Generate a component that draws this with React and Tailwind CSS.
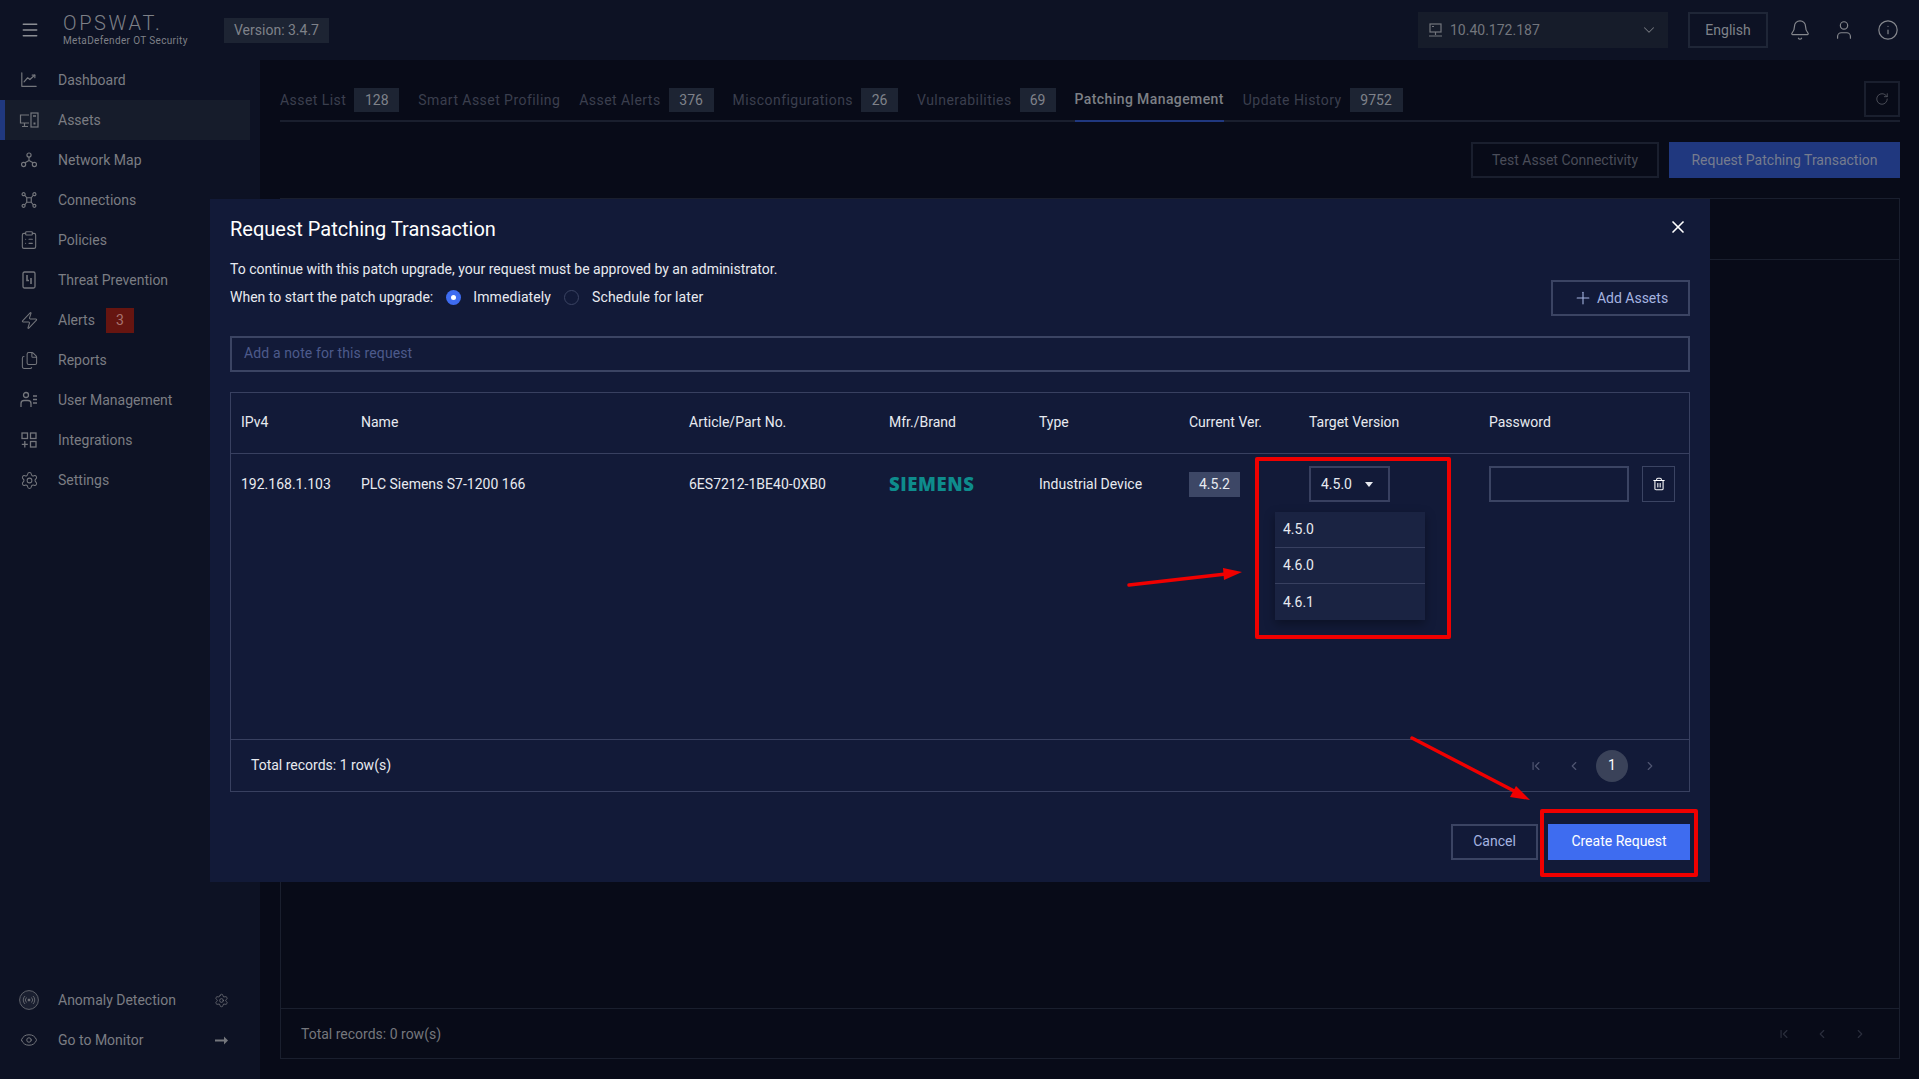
import React from "react";
import { Menu, ChevronDown, Bell, User, Info, RotateCw, X, Plus, Trash2, ChevronLeft, ChevronRight, ChevronFirst, Eye, Settings, ClipboardList, Zap, Files } from "lucide-react";

const I = ({ children, s = 20 }) => (
  <svg width={s} height={s} viewBox="0 0 20 20" fill="none" stroke="currentColor" strokeWidth="1.3" strokeLinecap="round" strokeLinejoin="round">{children}</svg>
);
const IcDash = () => <I s={18}><path d="M2 2v15h16" /><path d="M4.5 12l4-4.5 2.5 2 5.5-5" /><path d="M13.5 4.5h3v3" /></I>;
const IcAssets = () => <svg width="20" height="16" viewBox="0 0 20 16" fill="none" stroke="currentColor" strokeWidth="1.2"><path d="M10 3H1.5v8h8.500" /><path d="M5.500 11v3M3 14.500h6" /><rect x="12" y="1" width="7" height="14" /><path d="M14 4h3" strokeWidth="1.500" /><rect x="14.500" y="10.500" width="2" height="2" fill="currentColor" stroke="none" /></svg>;
const IcNet = () => <I s={18}><circle cx="10" cy="4.500" r="2.300" /><circle cx="4" cy="15" r="2.300" /><circle cx="16" cy="15" r="2.300" /><path d="M10 7v3.500M6 12.800L10 10.500l4 2.300" /></I>;
const IcConn = () => <I s={18}><circle cx="4" cy="3.500" r="1.700" /><circle cx="16" cy="3.500" r="1.700" /><circle cx="4" cy="16.500" r="1.700" /><circle cx="16" cy="16.500" r="1.700" /><path d="M5.500 5l2 2.500h5l2-2.500M5.500 15l2-2.500h5l2 2.500M7.500 7.500v5M12.500 7.500v5" /></I>;
const IcThreat = () => <svg width="14" height="18" viewBox="0 0 14 18" fill="none" stroke="currentColor" strokeWidth="1.300"><rect x="1" y="1" width="12" height="16" rx="1.500" /><path d="M5 4v5.500h2M9 7v6" strokeWidth="1.600" /></svg>;
const IcUsers = () => <svg width="18" height="18" viewBox="0 0 18 18" fill="none" stroke="currentColor" strokeWidth="1.300"><circle cx="6" cy="4" r="2.500" /><path d="M1 16v-3.500a3 3 0 013-3h4a3 3 0 013 3V16" /><path d="M13 5h4M13 8.500h4M13 12h4" /></svg>;
const IcInteg = () => <svg width="16" height="16" viewBox="0 0 16 16" fill="none" stroke="currentColor" strokeWidth="1.300"><rect x="1" y="1" width="5.500" height="5.500" /><rect x="9.500" y="1" width="5.500" height="5.500" /><rect x="9.500" y="9.500" width="5.500" height="5.500" /><path d="M3.800 9v6.500M0.800 12.300h6" /></svg>;
const IcAnom = () => <svg width="20" height="20" viewBox="0 0 20 20" fill="#1a1f30" stroke="currentColor" strokeWidth="0.800"><circle cx="10" cy="10" r="9.400" /><circle cx="10" cy="10" r="1" fill="currentColor" /><path d="M7.500 7.500a3.500 3.500 0 000 5M12.500 7.500a3.500 3.500 0 010 5M6 6a5.500 5.500 0 000 8M14 6a5.500 5.500 0 010 8" fill="none" /></svg>;
const IcDesk = () => <svg width="15" height="15" viewBox="0 0 15 15" fill="none" stroke="currentColor" strokeWidth="1.200"><rect x="2" y="1" width="11" height="8" /><path d="M7.500 9v3M1 13h13" /><path d="M4 3.500h2" /></svg>;
const IcArrow = () => <svg width="13" height="9" viewBox="0 0 13 9"><path d="M0 3.600h9V0.500L13 4.500 9 8.500V5.400H0z" fill="currentColor" /></svg>;

const nav = [
  ["Dashboard", IcDash],
  ["Assets", IcAssets, true],
  ["Network Map", IcNet],
  ["Connections", IcConn],
  ["Policies", () => <ClipboardList size={20} strokeWidth={1.300} />],
  ["Threat Prevention", IcThreat],
  ["Alerts", () => <Zap size={19} strokeWidth={1.300} />, false, "3"],
  ["Reports", () => <Files size={19} strokeWidth={1.300} />],
  ["User Management", IcUsers],
  ["Integrations", IcInteg],
  ["Settings", () => <Settings size={19} strokeWidth={1.300} />],
];

const tabs = [
  ["Asset List", "128", "w-[45px]"],
  ["Smart Asset Profiling"],
  ["Asset Alerts", "376", "w-[45px]"],
  ["Misconfigurations", "26", "w-[37px]"],
  ["Vulnerabilities", "69", "w-[36px]"],
  ["Patching Management", null, "", true],
  ["Update History", "9752", "w-[53px]"],
];

const cols = ["IPv4", "Name", "Article/Part No.", "Mfr./Brand", "Type", "Current Ver.", "Target Version", "Password"];
const gridCols = "grid grid-cols-[120px_328px_200px_150px_150px_120px_180px_1fr] pl-[10px]";

function Row({ icon: Ic, label, active, badge }) {
  return (
    <div className={`flex items-center h-10 w-[250px] text-sm ${active ? "bg-[#161c2b]" : ""}`}>
      <div className={`w-[5px] h-full ${active ? "bg-[#20387f]" : ""}`} />
      <div className="w-[50px] flex justify-center pr-[2px] text-[#74767c]"><Ic /></div>
      <span className="ml-[3px] text-[#7b7d83]">{label}</span>
      {badge && <span className="ml-[11px] w-7 h-[25px] flex items-center justify-center bg-[#661510] text-[#a8736f]">{badge}</span>}
    </div>
  );
}

export default function App() {
  return (
    <div className="relative w-full h-screen overflow-hidden flex flex-col bg-[#080b18] text-sm font-['Roboto',sans-serif]">
      <header className="h-[60px] shrink-0 bg-[#0d1224] flex items-center pl-[21px] pr-[20px]">
        <Menu size={20} strokeWidth={1.800} className="text-[#8c8e94] -ml-[1px]" />
        <div className="ml-[23px] w-[160px] flex flex-col leading-none text-[#7e8087]">
          <span className="text-[20px] font-light tracking-[2.600px] leading-[20px]">OPSWAT.</span>
          <span className="text-[10px] tracking-[0.350px] mt-[1px] leading-[13px]">MetaDefender OT Security</span>
        </div>
        <div className="ml-[1px] h-[25px] w-[105px] flex items-center justify-center bg-[#1d2433] text-[#7f828a]">Version: 3.4.7</div>
        <div className="ml-auto w-[250px] h-9 bg-[#161c2a] flex items-center px-[10px] text-[#73767d]">
          <IcDesk />
          <span className="ml-[7px]">10.40.172.187</span>
          <ChevronDown size={18} strokeWidth={1.400} className="ml-auto" />
        </div>
        <div className="ml-5 w-20 h-9 border-2 border-[#1f2637] flex items-center justify-center text-[#7f828a]">English</div>
        <Bell size={22} strokeWidth={1.300} className="ml-[21px] text-[#85878d]" />
        <User size={22} strokeWidth={1.300} className="ml-[22px] text-[#85878d]" />
        <Info size={22} strokeWidth={1.300} className="ml-[22px] text-[#85878d]" />
      </header>

      <div className="flex-1 flex min-h-0">
        <aside className="w-[260px] shrink-0 bg-[#0d1224] flex flex-col justify-between pb-[19px]">
          <nav className="flex flex-col">
            {nav.map(([label, Ic, active, badge]) => <Row key={label} icon={Ic} label={label} active={active} badge={badge} />)}
          </nav>
          <div className="flex flex-col text-[#74767c]">
            <div className="flex items-center h-10 pl-[5px] pr-[31px]">
              <div className="w-[50px] flex justify-center pr-[2px]"><IcAnom /></div>
              <span className="ml-[3px] text-[#7b7d83]">Anomaly Detection</span>
              <Settings size={15} strokeWidth={1.200} className="ml-auto" />
            </div>
            <div className="flex items-center h-10 pl-[5px] pr-[32px]">
              <div className="w-[50px] flex justify-center pr-[2px]"><Eye size={18} strokeWidth={1.300} /></div>
              <span className="ml-[3px] text-[#7b7d83]">Go to Monitor</span>
              <span className="ml-auto"><IcArrow /></span>
            </div>
          </div>
        </aside>

        <main className="flex-1 min-w-0 flex flex-col pl-5 pr-[19px] pt-[21px] pb-5">
          <div className="flex h-[41px] border-b-2 border-[#1a1f2e] shrink-0">
            {tabs.map(([label, n, w, active]) => (
              <div key={label} className={`flex items-center h-[41px] pb-[3px] mr-[19px] last:mr-0 ${active ? "border-b-2 border-[#20387f]" : ""}`}>
                <span className={active ? "text-[#7d8086] font-medium tracking-[0.400px]" : "text-[#3b3f4e] tracking-[0.450px]"}>{label}</span>
                {n && <span className={`ml-2 h-6 flex items-center justify-center bg-[#1d2433] text-[#7f828a] ${w}`}>{n}</span>}
              </div>
            ))}
            <div className="ml-auto w-9 h-9 border-2 border-[#1a1f2e] flex items-center justify-center text-[#5c5f68]">
              <RotateCw size={14} strokeWidth={1.300} />
            </div>
          </div>
          <div className="flex justify-end gap-[10px] mt-5 shrink-0">
            <div className="w-[188px] h-9 border-2 border-[#1a1f2e] flex items-center justify-center text-[#4a4d59]">Test Asset Connectivity</div>
            <div className="w-[231px] h-9 bg-[#20387f] flex items-center justify-center text-[#767c8e]">Request Patching Transaction</div>
          </div>
          <div className="mt-5 flex-1 flex flex-col border border-[#1a1f2e] min-h-0">
            <div className="h-[61px] border-b border-[#1a1f2e]" />
            <div className="flex-1" />
            <div className="h-[50px] border-t border-[#1a1f2e] flex items-center pl-[20px] pr-[32px] text-[#75777d]">
              <span>Total records: 0 row(s)</span>
              <div className="ml-auto flex gap-[24px] text-[#2a2e3c]">
                <ChevronFirst size={14} /><ChevronLeft size={14} /><ChevronRight size={14} />
              </div>
            </div>
          </div>
        </main>
      </div>

      {/* Dialog */}
      <div className="absolute left-[210px] top-[199px] w-[1500px] h-[683px] bg-[#121a38] px-5 flex flex-col text-[#e8eaf0]">
        <div className="flex items-center h-[60px] justify-between">
          <h2 className="text-[20px] font-normal text-white">Request Patching Transaction</h2>
          <X size={20} strokeWidth={2} className="text-white mr-[2px] -mt-[4px]" />
        </div>
        <p className="leading-5">To continue with this patch upgrade, your request must be approved by an administrator.</p>
        <div className="flex items-start justify-between h-[47px] mt-[3px]">
          <div className="flex items-center h-[20px] mt-[5px]">
            <span>When to start the patch upgrade:</span>
            <span className="ml-[13px] w-[15px] h-[15px] rounded-full bg-[#3e6cf0] flex items-center justify-center"><span className="w-[5px] h-[5px] rounded-full bg-white" /></span>
            <span className="ml-3 tracking-[0.100px]">Immediately</span>
            <span className="ml-[13px] w-[15px] h-[15px] rounded-full border border-[#3b4463]" />
            <span className="ml-[13px] tracking-[0.100px]">Schedule for later</span>
          </div>
          <div className="w-[139px] h-9 border-2 border-[#3b4463] flex items-center justify-center text-[#a5b4e0] -mt-[2px]">
            <Plus size={20} strokeWidth={1.300} className="mr-1" />Add Assets
          </div>
        </div>
        <div className="mt-[7px] h-9 border-2 border-[#3b4463] flex items-center pl-3 pb-[2px] text-[#4d5a8c] tracking-[0.120px]">Add a note for this request</div>

        <div className="relative mt-5 h-[400px] border border-[#384060] flex flex-col">
          <div className={`${gridCols} h-[61px] pb-[2px] items-center border-b border-[#384060] text-[#e8eaf0]`}>
            {cols.map(c => <span key={c}>{c}</span>)}
          </div>
          <div className={`${gridCols} h-[61px] items-center flex-none`}>
            <span className="-mt-[2px]">192.168.1.103</span>
            <span className="-mt-[2px]">PLC Siemens S7-1200 166</span>
            <span className="-mt-[2px]">6ES7212-1BE40-0XB0</span>
            <span className="text-[#0e8c8c] text-[18.500px] font-extrabold tracking-[0.600px] font-['Open_Sans',sans-serif]">SIEMENS</span>
            <span className="-mt-[2px]">Industrial Device</span>
            <span className="-mt-[1px]"><span className="inline-flex w-[51px] h-[25px] items-center justify-center bg-[#3d4766]">4.5.2</span></span>
            <span className="-mt-[1px]">
              <span className="inline-flex w-[81px] h-9 border-2 border-[#384060] items-center pl-[10px] gap-[10px]">
                4.5.0
                <svg width="8" height="5" viewBox="0 0 8 5" className="ml-[3px]"><path d="M0 0h8L4 5z" fill="#e8eaf0" /></svg>
              </span>
            </span>
            <div className="flex items-center gap-[13px] -mt-[1px]">
              <div className="w-[140px] h-9 border-2 border-[#3b4463]" />
              <div className="w-[33px] h-9 border border-[#3b4463] flex items-center justify-center">
                <Trash2 size={14} strokeWidth={1.800} className="text-white" />
              </div>
            </div>
          </div>
          <div className="flex-1" />
          <div className="h-[52px] border-t border-[#384060] flex items-center pl-5">
            <span className="-mt-[2px]">Total records: 1 row(s)</span>
            <div className="ml-auto flex items-center pr-8 text-[#505672]">
              <ChevronFirst size={14} />
              <ChevronLeft size={14} className="ml-[24px]" />
              <span className="ml-[15px] w-8 h-8 rounded-full bg-[#3a4259] text-white flex items-center justify-center pb-[2px]">1</span>
              <ChevronRight size={14} className="ml-[15px]" />
            </div>
          </div>

          {/* Open version menu */}
          <div className="absolute left-[1044px] top-[119px] w-[150px] bg-[#1a2342] shadow-[0_4px_10px_rgba(0,0,0,0.35)]">
            <div className="h-[36px] flex items-center pl-2 pb-[1px] border-b border-[#384060]">4.5.0</div>
            <div className="h-[36px] flex items-center pl-2 pb-[1px] border-b border-[#384060]">4.6.0</div>
            <div className="h-[36px] flex items-center pl-2">4.6.1</div>
          </div>
        </div>

        <div className="flex justify-end gap-[10px] mt-[32px]">
          <div className="w-[87px] h-9 border-2 border-[#3b4463] flex items-center justify-center pb-[2px] text-[#a5b4e0]">Cancel</div>
          <div className="w-[142px] h-9 bg-[#3e6cf0] flex items-center justify-center pb-[2px] text-white">Create Request</div>
        </div>
      </div>

      {/* Red annotations */}
      <div className="absolute left-[1255px] top-[457px] w-[196px] h-[182px] border-4 border-[#f00000] rounded-[2px]" />
      <div className="absolute left-[1540px] top-[809px] w-[158px] h-[68px] border-4 border-[#f00000] rounded-[2px]" />
      <svg className="absolute left-0 top-0 pointer-events-none" width="1919" height="1079" fill="none">
        <path d="M1129 585L1226 574" stroke="#f00000" strokeWidth="3.500" strokeLinecap="round" />
        <path d="M1223 568L1242 572L1224 580Z" fill="#f00000" />
        <path d="M1412 738L1518 793" stroke="#f00000" strokeWidth="3.500" strokeLinecap="round" />
        <path d="M1516 786L1530 800L1510 797Z" fill="#f00000" />
      </svg>
    </div>
  );
}
